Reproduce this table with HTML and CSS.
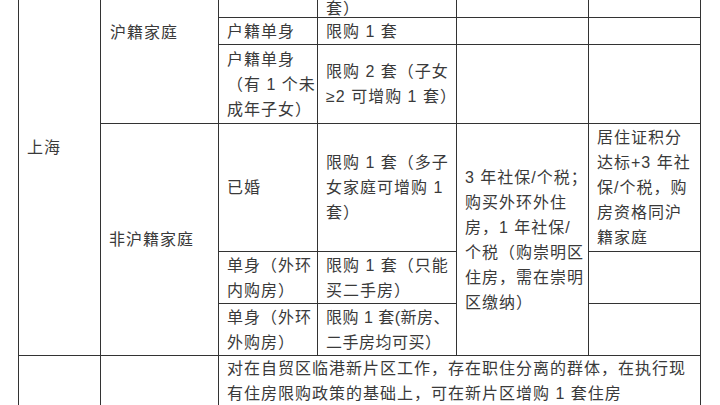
FILE: index.html
```html
<!DOCTYPE html>
<html lang="zh-CN">
<head>
<meta charset="utf-8">
<title>上海限购政策</title>
<link rel="stylesheet" href="styles.css">
</head>
<body>
<div class="sheet">
  <div class="cell city rows-6">上海</div>
  <div class="cell group-top rows-3">沪籍家庭</div>

  <div class="cell"></div>
  <div class="cell"><span>套）</span></div>
  <div class="cell"></div>
  <div class="cell"></div>

  <div class="cell">户籍单身</div>
  <div class="cell">限购 1 套</div>
  <div class="cell"></div>
  <div class="cell"></div>

  <div class="cell">户籍单身<br>（有 1 个未<br>成年子女）</div>
  <div class="cell">限购 2 套（子女<br>≥2 可增购 1 套）</div>
  <div class="cell"></div>
  <div class="cell"></div>

  <div class="cell rows-3">非沪籍家庭</div>
  <div class="cell">已婚</div>
  <div class="cell">限购 1 套（多子<br>女家庭可增购 1<br>套）</div>
  <div class="cell rows-3">3 年社保/个税；<br>购买外环外住<br>房，1 年社保/<br>个税（购崇明区<br>住房，需在崇明<br>区缴纳）</div>
  <div class="cell">居住证积分<br>达标+3 年社<br>保/个税，购<br>房资格同沪<br>籍家庭</div>

  <div class="cell">单身（外环<br>内购房）</div>
  <div class="cell">限购 1 套（只能<br>买二手房）</div>
  <div class="cell"></div>

  <div class="cell">单身（外环<br>外购房）</div>
  <div class="cell tight">限购 1 套(新房、<br>二手房均可买）</div>
  <div class="cell"></div>

  <div class="cell"></div>
  <div class="cell"></div>
  <div class="cell wide cols-4">对在自贸区临港新片区工作，存在职住分离的群体，在执行现<br>有住房限购政策的基础上，可在新片区增购 1 套住房</div>
</div>
</body>
</html>
```

FILE: styles.css
```css
html, body {
  margin: 0;
  padding: 0;
  background: #ffffff;
}

body {
  font-family: "Liberation Sans", "Noto Sans CJK SC", sans-serif;
  font-size: 16px;
  color: #3a3a3a;
  overflow: hidden;
}

.sheet {
  display: grid;
  grid-template-columns: 81px 117px 98px 138px 131px 111px;
  grid-template-rows: 17px 26px 78px 127px 51px 51px 54px;
  gap: 1px;
  padding: 0 1px 1px 1px;
  margin-left: 18px;
  width: max-content;
  background: #333333;
}

.cell {
  background: #ffffff;
  padding: 0 4px 0 8px;
  display: flex;
  flex-direction: column;
  justify-content: center;
  line-height: 25px;
  letter-spacing: 1px;
  white-space: nowrap;
  overflow: hidden;
}

.tight {
  letter-spacing: 0.5px;
  padding-right: 0;
}

.rows-3 {
  grid-row: span 3;
}

.rows-6 {
  grid-row: span 6;
}

.cols-4 {
  grid-column: span 4;
}

.city {
  justify-content: flex-start;
  padding-top: 135px;
}

.group-top {
  justify-content: flex-start;
  padding-top: 20px;
  padding-left: 9px;
}

.wide {
  justify-content: flex-start;
  padding-top: 0;
}
```
